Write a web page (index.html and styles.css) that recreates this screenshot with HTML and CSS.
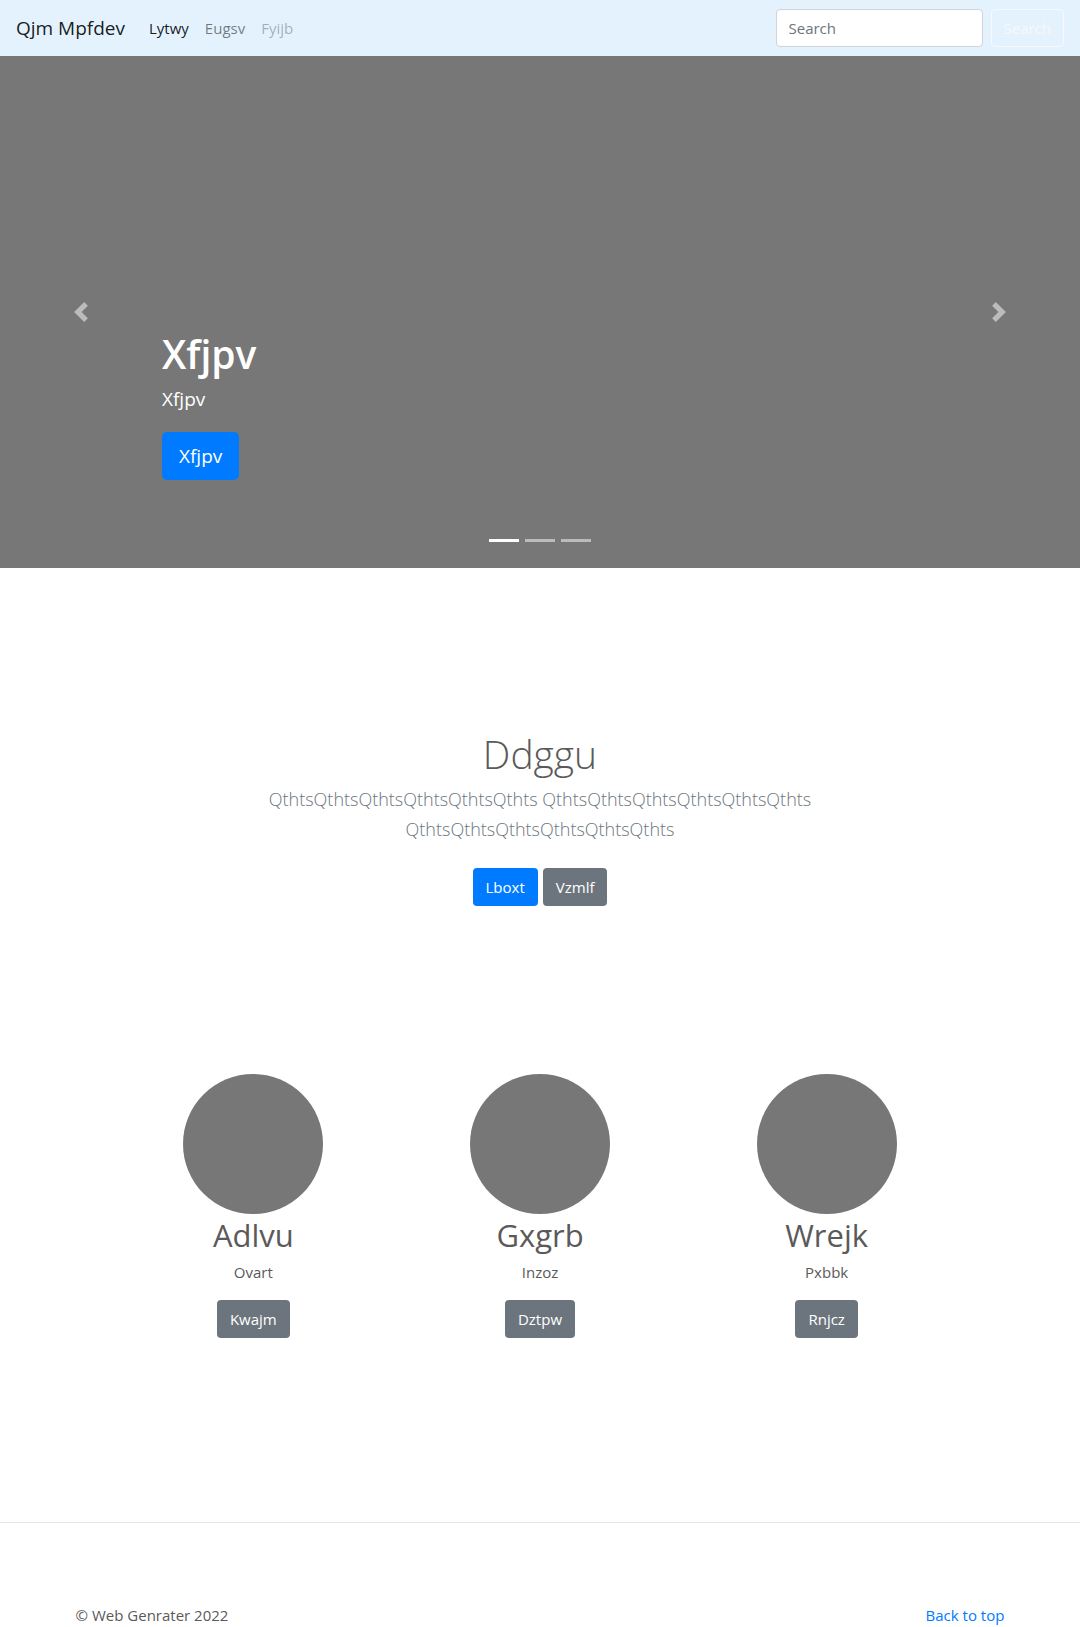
FILE: index.html
```html
<!DOCTYPE html>
<html lang="en">
<head>
<meta charset="utf-8">
<meta name="viewport" content="width=device-width, initial-scale=1">
<title>Qjm Mpfdev</title>
<link rel="stylesheet" href="styles.css">
</head>
<body id="top">
<header class="navbar">
  <a class="brand" href="#">Qjm Mpfdev</a>
  <nav class="nav">
    <a class="nav-link active" href="#">Lytwy</a>
    <a class="nav-link" href="#">Eugsv</a>
    <a class="nav-link disabled" href="#">Fyijb</a>
  </nav>
  <form class="search">
    <input class="search-input" type="search" placeholder="Search" aria-label="Search">
    <button class="btn btn-outline" type="submit">Search</button>
  </form>
</header>
<main>
  <section class="carousel">
    <button class="arrow" type="button" aria-label="Previous"><svg width="20" height="20" viewBox="0 0 8 8" fill="#fff"><path d="M5.25 0l-4 4 4 4 1.5-1.5L4.25 4l2.5-2.5L5.25 0z"/></svg></button>
    <div class="caption">
      <h1 class="caption-title">Xfjpv</h1>
      <p class="caption-text">Xfjpv</p>
      <a class="btn btn-primary btn-lg" href="#">Xfjpv</a>
    </div>
    <button class="arrow" type="button" aria-label="Next"><svg width="20" height="20" viewBox="0 0 8 8" fill="#fff"><path d="M2.75 0l-1.5 1.5L3.75 4l-2.5 2.5L2.75 8l4-4-4-4z"/></svg></button>
    <div class="indicators">
      <button class="indicator current" type="button" aria-label="Slide 1"></button>
      <button class="indicator" type="button" aria-label="Slide 2"></button>
      <button class="indicator" type="button" aria-label="Slide 3"></button>
    </div>
  </section>
  <section class="intro">
    <h2 class="intro-title">Ddggu</h2>
    <p class="lead">QthtsQthtsQthtsQthtsQthtsQthts QthtsQthtsQthtsQthtsQthtsQthts QthtsQthtsQthtsQthtsQthtsQthts</p>
    <div class="actions">
      <a class="btn btn-primary" href="#">Lboxt</a>
      <a class="btn btn-secondary" href="#">Vzmlf</a>
    </div>
  </section>
  <section class="features">
    <article class="feature">
      <div class="circle"></div>
      <h2 class="feature-title">Adlvu</h2>
      <p class="feature-text">Ovart</p>
      <a class="btn btn-secondary" href="#">Kwajm</a>
    </article>
    <article class="feature">
      <div class="circle"></div>
      <h2 class="feature-title">Gxgrb</h2>
      <p class="feature-text">Inzoz</p>
      <a class="btn btn-secondary" href="#">Dztpw</a>
    </article>
    <article class="feature">
      <div class="circle"></div>
      <h2 class="feature-title">Wrejk</h2>
      <p class="feature-text">Pxbbk</p>
      <a class="btn btn-secondary" href="#">Rnjcz</a>
    </article>
  </section>
</main>
<footer class="footer">
  <div class="footer-inner">
    <span>© Web Genrater 2022</span>
    <a class="footer-link" href="#top">Back to top</a>
  </div>
</footer>
</body>
</html>
```
FILE: styles.css
```css
*, *::before, *::after { box-sizing: border-box; }

body {
  margin: 0;
  font: 400 15px/24px "Segoe UI", "Open Sans", "Noto Sans", sans-serif;
  color: #5a5a5a;
  background: #fff;
}

h1, h2, p { margin: 0; }
a { text-decoration: none; }

.navbar {
  display: flex;
  align-items: center;
  min-height: 56px;
  padding: 0 16px;
  background: #e3f2fd;
}

.brand {
  margin-right: 16px;
  font-size: 19px;
  line-height: 30px;
  color: rgba(0, 0, 0, .9);
}

.nav { display: flex; }
.nav-link { padding: 8px; color: rgba(0, 0, 0, .5); }
.nav-link.active { color: rgba(0, 0, 0, .9); }
.nav-link.disabled { color: rgba(0, 0, 0, .3); }

.search { display: flex; gap: 8px; margin-left: auto; }
.search-input {
  width: 207px;
  height: 38px;
  padding: 6px 12px;
  border: 1px solid #ced4da;
  border-radius: 4px;
  font: inherit;
  background: #fff;
  appearance: none;
}
.search-input::placeholder { color: #6c757d; opacity: 1; }

.btn {
  display: inline-block;
  padding: 6px 12px;
  border: 1px solid transparent;
  border-radius: 4px;
  font: inherit;
  color: #fff;
}
.btn-primary { background: #007bff; }
.btn-secondary { background: #6c757d; }
.btn-outline { color: #f8f9fa; border-color: #f8f9fa; background: transparent; }
.btn-lg { padding: 8px 16px; border-radius: 5px; font-size: 19px; line-height: 30px; }

.carousel {
  position: relative;
  display: grid;
  grid-template-columns: 15% 1fr 15%;
  min-height: 512px;
  background: #777;
}
.arrow {
  display: flex;
  align-items: center;
  justify-content: center;
  padding: 0;
  border: 0;
  background: none;
  opacity: .5;
}
.caption { align-self: end; padding-bottom: 88px; color: #fff; }
.caption-title { margin-bottom: 6px; font-size: 39px; line-height: 48px; font-weight: 600; }
.caption-text { margin-bottom: 18px; font-size: 19px; line-height: 30px; }

.indicators {
  position: absolute;
  left: 0;
  right: 0;
  bottom: 16px;
  display: flex;
  justify-content: center;
  gap: 6px;
}
.indicator {
  width: 30px;
  height: 23px;
  padding: 0;
  border: solid transparent;
  border-width: 10px 0;
  background: #fff;
  background-clip: padding-box;
  opacity: .5;
}
.indicator.current { opacity: 1; }

.intro {
  max-width: 560px;
  margin: 0 auto;
  padding: 162px 0 96px;
  text-align: center;
}
.intro-title { margin-bottom: 6px; font-size: 39px; line-height: 48px; font-weight: 300; }
.lead { margin-bottom: 16px; font-size: 18px; line-height: 30px; font-weight: 300; color: #6c757d; }
.actions { display: flex; justify-content: center; gap: 5px; padding-top: 8px; }

.features {
  display: grid;
  grid-template-columns: repeat(3, 1fr);
  max-width: 860px;
  margin: 0 auto;
  padding: 72px 0 184px;
  text-align: center;
}
.circle { width: 140px; height: 140px; margin: 0 auto; border-radius: 50%; background: #777; }
.feature-title { margin-bottom: 4px; font-size: 31px; line-height: 42px; font-weight: 400; }
.feature-text { margin-bottom: 16px; }

.footer { border-top: 1px solid #e5e5e5; padding-top: 80px; }
.footer-inner { display: flex; justify-content: space-between; width: 86%; margin: 0 auto; }
.footer-link { color: #007bff; }
```
